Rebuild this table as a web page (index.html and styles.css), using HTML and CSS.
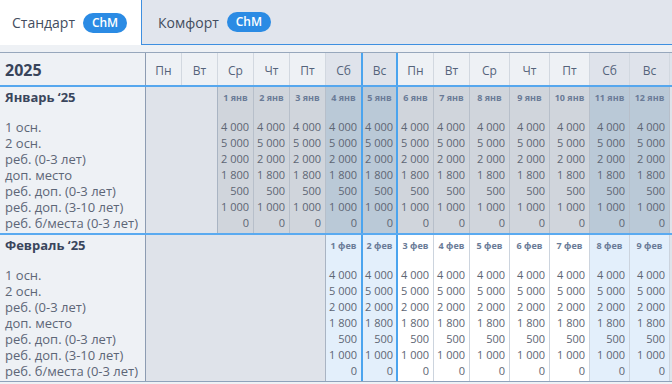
FILE: index.html
```html
<!DOCTYPE html>
<html lang="ru">
<head>
<meta charset="utf-8">
<title>Цены</title>
<link rel="stylesheet" href="styles.css">
</head>
<body>
<div class="tabs">
  <div class="tab active"><span>Стандарт</span><span class="badge">ChM</span></div>
  <div class="tab inactive"><span>Комфорт</span><span class="badge">ChM</span></div>
  <div class="tab-fill"></div>
</div>

<div class="grid head">
  <div class="h year">2025</div>
  <div class="h">Пн</div><div class="h">Вт</div><div class="h">Ср</div><div class="h">Чт</div><div class="h">Пт</div>
  <div class="h we">Сб</div><div class="h we hl">Вс</div>
  <div class="h">Пн</div><div class="h">Вт</div><div class="h">Ср</div><div class="h">Чт</div><div class="h">Пт</div>
  <div class="h we">Сб</div><div class="h we">Вс</div>
  <div class="h tail"></div>
</div>

<div class="grid sec">
  <div class="c lab">
    <div class="mname">Январь ‘25</div>
    <div class="l">1 осн.</div><div class="l">2 осн.</div><div class="l">реб. (0-3 лет)</div><div class="l">доп. место</div><div class="l">реб. доп. (0-3 лет)</div><div class="l">реб. доп. (3-10 лет)</div><div class="l">реб. б/места (0-3 лет)</div>
  </div>
  <div class="c empty span2"></div>
  <div class="c past"><div class="dl">1 янв</div><div class="v">4&nbsp;000</div><div class="v">5&nbsp;000</div><div class="v">2&nbsp;000</div><div class="v">1&nbsp;800</div><div class="v">500</div><div class="v">1&nbsp;000</div><div class="v">0</div></div>
  <div class="c past"><div class="dl">2 янв</div><div class="v">4&nbsp;000</div><div class="v">5&nbsp;000</div><div class="v">2&nbsp;000</div><div class="v">1&nbsp;800</div><div class="v">500</div><div class="v">1&nbsp;000</div><div class="v">0</div></div>
  <div class="c past"><div class="dl">3 янв</div><div class="v">4&nbsp;000</div><div class="v">5&nbsp;000</div><div class="v">2&nbsp;000</div><div class="v">1&nbsp;800</div><div class="v">500</div><div class="v">1&nbsp;000</div><div class="v">0</div></div>
  <div class="c past we"><div class="dl">4 янв</div><div class="v">4&nbsp;000</div><div class="v">5&nbsp;000</div><div class="v">2&nbsp;000</div><div class="v">1&nbsp;800</div><div class="v">500</div><div class="v">1&nbsp;000</div><div class="v">0</div></div>
  <div class="c past we hl"><div class="dl">5 янв</div><div class="v">4&nbsp;000</div><div class="v">5&nbsp;000</div><div class="v">2&nbsp;000</div><div class="v">1&nbsp;800</div><div class="v">500</div><div class="v">1&nbsp;000</div><div class="v">0</div></div>
  <div class="c past"><div class="dl">6 янв</div><div class="v">4&nbsp;000</div><div class="v">5&nbsp;000</div><div class="v">2&nbsp;000</div><div class="v">1&nbsp;800</div><div class="v">500</div><div class="v">1&nbsp;000</div><div class="v">0</div></div>
  <div class="c past"><div class="dl">7 янв</div><div class="v">4&nbsp;000</div><div class="v">5&nbsp;000</div><div class="v">2&nbsp;000</div><div class="v">1&nbsp;800</div><div class="v">500</div><div class="v">1&nbsp;000</div><div class="v">0</div></div>
  <div class="c past"><div class="dl">8 янв</div><div class="v">4&nbsp;000</div><div class="v">5&nbsp;000</div><div class="v">2&nbsp;000</div><div class="v">1&nbsp;800</div><div class="v">500</div><div class="v">1&nbsp;000</div><div class="v">0</div></div>
  <div class="c past"><div class="dl">9 янв</div><div class="v">4&nbsp;000</div><div class="v">5&nbsp;000</div><div class="v">2&nbsp;000</div><div class="v">1&nbsp;800</div><div class="v">500</div><div class="v">1&nbsp;000</div><div class="v">0</div></div>
  <div class="c past"><div class="dl">10 янв</div><div class="v">4&nbsp;000</div><div class="v">5&nbsp;000</div><div class="v">2&nbsp;000</div><div class="v">1&nbsp;800</div><div class="v">500</div><div class="v">1&nbsp;000</div><div class="v">0</div></div>
  <div class="c past we"><div class="dl">11 янв</div><div class="v">4&nbsp;000</div><div class="v">5&nbsp;000</div><div class="v">2&nbsp;000</div><div class="v">1&nbsp;800</div><div class="v">500</div><div class="v">1&nbsp;000</div><div class="v">0</div></div>
  <div class="c past we"><div class="dl">12 янв</div><div class="v">4&nbsp;000</div><div class="v">5&nbsp;000</div><div class="v">2&nbsp;000</div><div class="v">1&nbsp;800</div><div class="v">500</div><div class="v">1&nbsp;000</div><div class="v">0</div></div>
  <div class="c tail"></div>
</div>

<div class="grid sec last">
  <div class="c lab">
    <div class="mname">Февраль ‘25</div>
    <div class="l">1 осн.</div><div class="l">2 осн.</div><div class="l">реб. (0-3 лет)</div><div class="l">доп. место</div><div class="l">реб. доп. (0-3 лет)</div><div class="l">реб. доп. (3-10 лет)</div><div class="l">реб. б/места (0-3 лет)</div>
  </div>
  <div class="c empty span5"></div>
  <div class="c fut we"><div class="dl">1 фев</div><div class="v">4&nbsp;000</div><div class="v">5&nbsp;000</div><div class="v">2&nbsp;000</div><div class="v">1&nbsp;800</div><div class="v">500</div><div class="v">1&nbsp;000</div><div class="v">0</div></div>
  <div class="c fut we hl"><div class="dl">2 фев</div><div class="v">4&nbsp;000</div><div class="v">5&nbsp;000</div><div class="v">2&nbsp;000</div><div class="v">1&nbsp;800</div><div class="v">500</div><div class="v">1&nbsp;000</div><div class="v">0</div></div>
  <div class="c fut"><div class="dl">3 фев</div><div class="v">4&nbsp;000</div><div class="v">5&nbsp;000</div><div class="v">2&nbsp;000</div><div class="v">1&nbsp;800</div><div class="v">500</div><div class="v">1&nbsp;000</div><div class="v">0</div></div>
  <div class="c fut"><div class="dl">4 фев</div><div class="v">4&nbsp;000</div><div class="v">5&nbsp;000</div><div class="v">2&nbsp;000</div><div class="v">1&nbsp;800</div><div class="v">500</div><div class="v">1&nbsp;000</div><div class="v">0</div></div>
  <div class="c fut"><div class="dl">5 фев</div><div class="v">4&nbsp;000</div><div class="v">5&nbsp;000</div><div class="v">2&nbsp;000</div><div class="v">1&nbsp;800</div><div class="v">500</div><div class="v">1&nbsp;000</div><div class="v">0</div></div>
  <div class="c fut"><div class="dl">6 фев</div><div class="v">4&nbsp;000</div><div class="v">5&nbsp;000</div><div class="v">2&nbsp;000</div><div class="v">1&nbsp;800</div><div class="v">500</div><div class="v">1&nbsp;000</div><div class="v">0</div></div>
  <div class="c fut"><div class="dl">7 фев</div><div class="v">4&nbsp;000</div><div class="v">5&nbsp;000</div><div class="v">2&nbsp;000</div><div class="v">1&nbsp;800</div><div class="v">500</div><div class="v">1&nbsp;000</div><div class="v">0</div></div>
  <div class="c fut we"><div class="dl">8 фев</div><div class="v">4&nbsp;000</div><div class="v">5&nbsp;000</div><div class="v">2&nbsp;000</div><div class="v">1&nbsp;800</div><div class="v">500</div><div class="v">1&nbsp;000</div><div class="v">0</div></div>
  <div class="c fut we"><div class="dl">9 фев</div><div class="v">4&nbsp;000</div><div class="v">5&nbsp;000</div><div class="v">2&nbsp;000</div><div class="v">1&nbsp;800</div><div class="v">500</div><div class="v">1&nbsp;000</div><div class="v">0</div></div>
  <div class="c tail"></div>
</div>
</body>
</html>
```

FILE: styles.css
```css
html, body {
  margin: 0;
  padding: 0;
}
body {
  width: 672px;
  height: 384px;
  overflow: hidden;
  background: #eef1f5;
  font-family: "Open Sans", "Noto Sans", sans-serif;
}

/* tabs */
.tabs {
  display: flex;
  height: 45px;
  background: #e1e5ed;
}
.tab {
  display: flex;
  align-items: center;
  gap: 8px;
  box-sizing: border-box;
  height: 45px;
  font-size: 14px;
  color: #434d5e;
}
.tab.active {
  width: 141px;
  padding-left: 12px;
  background: #fff;
}
.tab.inactive {
  padding: 0 14px 0 16px;
  border-left: 1px solid #3e8fe0;
  border-bottom: 1px solid #3e8fe0;
}
.tab-fill {
  flex: 1;
  border-bottom: 1px solid #3e8fe0;
}
.badge {
  display: inline-block;
  width: 44px;
  height: 20px;
  line-height: 20px;
  border-radius: 10px;
  background: #2b8be4;
  color: #fff;
  font-size: 12px;
  font-weight: 600;
  text-align: center;
}

/* grid */
.grid {
  display: grid;
  grid-template-columns: 146px repeat(9, 36px) repeat(5, 40px) 1fr;
}
.head {
  margin-top: 7px;
  border-top: 1px solid #97a7bc;
  border-bottom: 2px solid #56a7ee;
}
.h {
  box-sizing: border-box;
  height: 32px;
  display: flex;
  align-items: center;
  justify-content: center;
  padding-top: 2px;
  background: #eef1f5;
  border-right: 1px solid #d2d8e0;
  font-size: 12px;
  color: #55637b;
}
.h.we {
  background: #dfe3eb;
}
.h.year {
  justify-content: flex-start;
  padding-left: 5px;
  font-size: 16px;
  font-weight: 700;
  color: #38445a;
  border-right-color: #8d9cb2;
}
.h.tail {
  border-right: 0;
  background: #dfe3eb;
}

.sec {
  border-bottom: 2px solid #5aaaf0;
}
.sec.last {
  border-bottom: 1px solid #8fa2bb;
}
.c {
  box-sizing: border-box;
  padding-bottom: 2px;
  border-right: 1px solid #b7bfca;
}
.lab {
  background: #eef1f5;
  border-right-color: #8d9cb2;
}
.mname {
  height: 32px;
  box-sizing: border-box;
  padding: 1px 0 0 5px;
  line-height: 18px;
  font-size: 13px;
  font-weight: 700;
  color: #3a465c;
}
.l {
  height: 16px;
  line-height: 16px;
  padding-left: 5px;
  font-size: 13px;
  color: #5d6677;
  white-space: nowrap;
}
.dl {
  height: 32px;
  box-sizing: border-box;
  padding-top: 2px;
  line-height: 18px;
  text-align: center;
  font-size: 9px;
  font-weight: 700;
  color: #6a7b97;
  white-space: nowrap;
}
.v {
  height: 16px;
  line-height: 16px;
  padding-right: 4px;
  text-align: right;
  font-size: 11px;
  color: #5e6674;
  white-space: nowrap;
}

.empty {
  background: #dfe3ea;
  border-right-color: #a9b4c3;
}
.span2 { grid-column: span 2; }
.span5 { grid-column: span 5; }

.past {
  background: #d0d5dc;
}
.past.we {
  background: #bac9d7;
}
.fut {
  background: #fff;
  border-right-color: #ccd4de;
}
.fut.we {
  background: #e3effb;
}
.c.tail {
  background: #dfe3ea;
  border-right: 0;
}

.hl {
  border-right-color: #4ba4ee;
  box-shadow: inset 1px 0 #4ba4ee, inset -1px 0 #4ba4ee, -1px 0 0 #4ba4ee;
}
```
